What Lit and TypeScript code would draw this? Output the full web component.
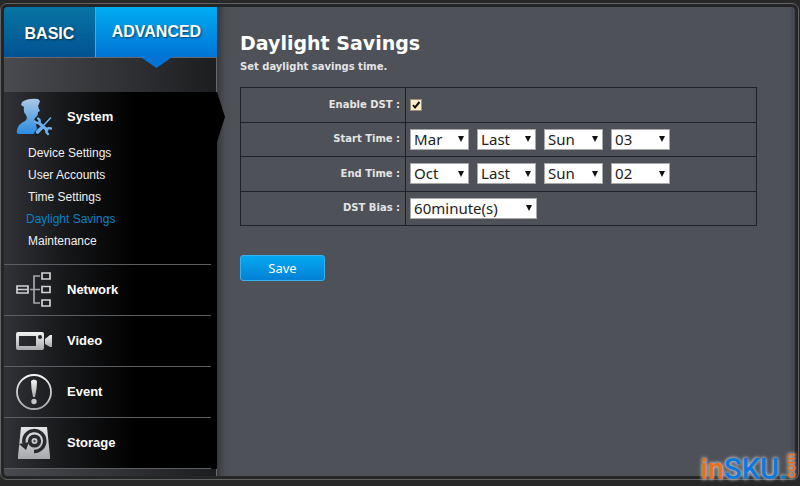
import { LitElement, html, css, svg } from "lit";
import { customElement, property, state } from "lit/decorators.js";
import { classMap } from "lit/directives/class-map.js";

const icons: Record<string, unknown> = {
  system: svg`
    <defs><linearGradient id="blue" gradientUnits="userSpaceOnUse" x1="0" y1="1" x2="0" y2="36">
      <stop offset="0" stop-color="#a9c8e8"/><stop offset="1" stop-color="#2a8be0"/>
    </linearGradient></defs>
    <path fill="url(#blue)" d="M6 4Q12 0 22 1L24 3 23 6 22 8Q23 11 24 13L22 14Q22 18 20 19L19 20Q18 24 20 26L22 36H3Q0 36 1 32Q2 26 9 23Q12 21 10 17Q7 14 8 9L5 7Z"/>
    <path fill="none" stroke="#16181b" stroke-width="5" stroke-linecap="round" d="M21 22L33 34M34 21L21 35"/>
    <g fill="none" stroke="#6fb0ea" stroke-linecap="round">
      <path stroke-width="3" d="M23 25L31 32"/>
      <path stroke-width="2.400" d="M22 20.500Q24.500 22 23.500 24.500Q21 26 18.800 23.500M35 30.500Q31.500 29.500 30.500 31.500Q29.500 34.500 32 36"/>
      <path stroke-width="1.700" d="M34.500 20L27 28"/>
      <path stroke-width="3.800" d="M25 30.500L21.500 34"/>
    </g>`,
  network: svg`
    <g fill="none" stroke="#d2d2d4" stroke-width="1.700">
      <path d="M1 15H12V22H1ZM1 18.500H12"/><path d="M26 2H34V8H26Z"/><path d="M26 15.500H34V21.500H26Z"/><path d="M26 29H34V35H26Z"/>
      <path stroke="#a5a6a8" d="M14 18.500H24M24 5H18V32H24"/>
    </g>`,
  video: svg`
    <defs><linearGradient id="silver" x1="0" y1="0" x2="0" y2="1">
      <stop offset="0" stop-color="#f2f2f2"/><stop offset="1" stop-color="#a9aaac"/>
    </linearGradient></defs>
    <path fill="url(#silver)" fill-rule="evenodd" d="M2 10H26Q28 10 28 12V26Q28 28 26 28H2Q0 28 0 26V12Q0 10 2 10ZM3 14V24H20V14ZM24 13A2 2 0 1 0 24 17A2 2 0 1 0 24 13Z"/>
    <path fill="url(#silver)" d="M29 17L34 13H36V25H34L29 22Z"/>`,
  event: svg`
    <defs><linearGradient id="ring" x1="0" y1="0" x2="0" y2="1">
      <stop offset="0" stop-color="#f4f4f4"/><stop offset="1" stop-color="#a9aaac"/>
    </linearGradient></defs>
    <circle cx="18" cy="19" r="17" fill="none" stroke="url(#ring)" stroke-width="1.800"/>
    <path fill="url(#ring)" d="M15 8Q18 5 21 8Q21 15 19 24H17Q15 15 15 8Z"/><circle cx="18" cy="28.500" r="2.700" fill="#c4c4c6"/>`,
  storage: svg`
    <defs><linearGradient id="disk" x1="0" y1="0" x2="0" y2="1">
      <stop offset="0" stop-color="#e6e6e7"/><stop offset="1" stop-color="#a7a8ac"/>
    </linearGradient></defs>
    <path fill="url(#disk)" d="M5 3H31L34 32V35H2V32Z"/>
    <path fill="none" stroke="#27292c" stroke-width="3.400" d="M8 19A10.500 10.500 0 1 1 18 27.500"/>
    <path fill="#27292c" d="M3 20L13 18 10 26Z"/>
    <circle cx="18.500" cy="17" r="4.800" fill="none" stroke="#27292c" stroke-width="3.600"/>
    <circle cx="18.500" cy="17" r="1.200" fill="#4a4b4e"/>`,
};

@customElement("nav-section")
class NavSection extends LitElement {
  @property() icon = "";
  @property() label = "";
  @property({ type: Array }) items: string[] = [];
  @property() current = "";

  static styles = css`
    :host { display: block; position: relative; background: linear-gradient(90deg, #303237 0, #17181a 28%, #000 62%); }
    .head { display: flex; align-items: center; gap: 15px; height: 50px; padding-left: 12px; color: #fff; text-decoration: none; font: bold 13px/16px "Liberation Sans", Arial, sans-serif; }
    .head svg { width: 36px; height: 38px; flex: none; }
    .rule { height: 1px; margin-right: 6px; background: #5c5e62; }
    .list { list-style: none; margin: 0; padding: 0 0 12px 24px; }
    .link { color: #f0f0f0; text-decoration: none; font: 12px/22px "Liberation Sans", Arial, sans-serif; }
    .entry { height: 22px; }
    .entry.active { margin-left: -2px; }
    .active .link { color: #0781c8; }
    .pointer { position: absolute; left: 100%; top: 0; width: 8px; height: 50px; background: #000; clip-path: polygon(0 0, 100% 50%, 0 100%); }
  `;

  render() {
    return html`
      <a class="head" href="#${this.icon}">
        <svg viewBox="0 0 36 38" aria-hidden="true">${icons[this.icon]}</svg>${this.label}
      </a>
      ${this.items.length
        ? html`<ul class="list">
              ${this.items.map((item) => html`<li class=${classMap({ entry: true, active: item === this.current })}>
                <a class="link" href="#">${item}</a></li>`)}
            </ul>
            <span class="pointer"></span>`
        : null}
      <div class="rule"></div>
    `;
  }
}

@customElement("select-box")
class SelectBox extends LitElement {
  @property() label = "";
  @property() value = "";
  @property({ type: Boolean, reflect: true }) wide = false;

  static styles = css`
    :host { display: inline-grid; width: 59px; }
    :host([wide]) { width: 127px; }
    .field, .arrow { grid-area: 1 / 1; }
    .field { appearance: none; box-sizing: border-box; width: 100%; height: 21px; margin: 0; padding: 0 3px; border: 1px solid #a9a9a9; border-radius: 0; background: #fff; color: #222; font: 15px/19px "Noto Sans", sans-serif; }
    .arrow { justify-self: end; align-self: center; width: 6px; height: 6px; margin-right: 5px; fill: #111; pointer-events: none; }
  `;

  render() {
    return html`
      <select class="field" aria-label=${this.label}><option>${this.value}</option></select>
      <svg class="arrow" viewBox="0 0 6 6" aria-hidden="true"><path d="M0 0H6L3 6Z" /></svg>
    `;
  }
}

@customElement("app-root")
class AppRoot extends LitElement {
  @state() private enabled = true;

  private rows = [
    { label: "Start Time :", values: ["Mar", "Last", "Sun", "03"] },
    { label: "End Time :", values: ["Oct", "Last", "Sun", "02"] },
  ];
  private parts = ["month", "week", "day", "hour"];

  static styles = css`
    :host { display: block; position: relative; box-sizing: border-box; min-height: 100vh; padding: 3px 1px 6px 0; background: #282828; }
    .frame { box-sizing: border-box; min-height: calc(100vh - 9px); display: flex; padding: 3px; border: 1px solid #626262; border-radius: 7px; background: #242527; }
    .side { flex: none; width: 213px; display: flex; flex-direction: column; border-radius: 4px 0 0 4px; background: linear-gradient(90deg, #494b50, #1c1d1f); }
    .tabs { display: flex; border-radius: 4px 0 0 0; }
    .tab { height: 50px; border: 0; padding: 0; color: #fff; font: bold 16px/20px "Liberation Sans", Arial, sans-serif; text-shadow: 1px 1px 2px #0008; }
    .basic { flex: 3; border-radius: 4px 0 0 0; background: linear-gradient(#0775a3, #015292); }
    .advanced { position: relative; flex: 4; border-left: 1px solid #4fa6dc; background: linear-gradient(#00acf2, #0174d6); }
    .advanced::after { content: ""; position: absolute; top: 100%; left: 50%; width: 32px; height: 11px; margin-left: -16px; background: #0174d6; clip-path: polygon(0 0, 100% 0, 50% 100%); }
    .tab .text { display: block; padding-top: 4px; }
    .advanced .text { padding: 0; }
    .strip { height: 35px; box-sizing: border-box; border: solid #66686d; border-width: 1px 1px 0 0; }
    .tail { flex: 1; min-height: 6px; border-right: 1px solid #66686d; }
    .main { flex: 1; min-width: 0; padding: 24px 38px 24px 23px; border-radius: 0 4px 4px 0; color: #fff; background: linear-gradient(90deg, #36383d 0, #4b4e54 8px, #4e5158 16px, #4e5158 calc(100% - 6px), #43464c); font-family: "DejaVu Sans", Verdana, sans-serif; }
    .title { margin: 0; font-size: 19px; line-height: 24px; font-weight: bold; }
    .intro { margin: 5px 0 13px; font-size: 10px; line-height: 14px; font-weight: bold; color: #e4e4e4; }
    .form { width: 100%; height: 139px; border-collapse: collapse; }
    .form th, .form td { height: 34px; box-sizing: border-box; border: 1px solid #202124; padding: 0; }
    .form th { width: 32%; padding-right: 5px; text-align: right; font-size: 10px; line-height: 14px; color: #e4e4e4; }
    .form td { padding-left: 4px; }
    .cells { display: flex; align-items: center; gap: 8px; }
    .check { appearance: none; display: block; width: 12px; height: 12px; margin: 0; border: 1px solid #9c927c; background: #fbeccb; }
    .box { display: grid; justify-content: start; }
    .box .check, .tick { grid-area: 1 / 1; }
    .tick { width: 12px; height: 12px; pointer-events: none; fill: none; stroke: #111; stroke-width: 2; }
    .save { display: block; width: 85px; height: 26px; margin-top: 29px; padding: 0; border: 1px solid #36b2ec; border-radius: 3px; background: linear-gradient(#05a8f0, #0280d6); color: #fff; font: 13px/18px "Noto Sans", sans-serif; }
    .mark { position: absolute; right: 3px; bottom: 2px; display: flex; align-items: flex-end; font: 500 29px/30px Roboto, "Liberation Sans", sans-serif; color: #0d78de; text-shadow: 0 0 3px #c4c6cc, 0 0 4px #c4c6cc; }
    .orange { color: #e8701a; }
    .com { writing-mode: vertical-rl; rotate: 180deg; margin: 0 0 6px -2px; font-size: 13px; line-height: 12px; color: #e8701a; }
  `;

  render() {
    return html`
      <div class="frame">
        <nav class="side" aria-label="Settings">
          <div class="tabs">
            <button class="tab basic"><span class="text">BASIC</span></button>
            <button class="tab advanced"><span class="text">ADVANCED</span></button>
          </div>
          <div class="strip"></div>
          <nav-section icon="system" label="System" current="Daylight Savings"
            .items=${["Device Settings", "User Accounts", "Time Settings", "Daylight Savings", "Maintenance"]}></nav-section>
          <nav-section icon="network" label="Network"></nav-section>
          <nav-section icon="video" label="Video"></nav-section>
          <nav-section icon="event" label="Event"></nav-section>
          <nav-section icon="storage" label="Storage"></nav-section>
          <div class="tail"></div>
        </nav>
        <main class="main">
          <h1 class="title">Daylight Savings</h1>
          <p class="intro">Set daylight savings time.</p>
          <table class="form">
            <tr>
              <th scope="row"><label for="dst">Enable DST :</label></th>
              <td>
                <span class="box">
                  <input id="dst" class="check" type="checkbox" .checked=${this.enabled}
                    @change=${(e: Event) => (this.enabled = (e.target as HTMLInputElement).checked)} />
                  ${this.enabled ? html`<svg class="tick" viewBox="0 0 12 12" aria-hidden="true"><path d="M3 6L5 8.500L9.500 3" /></svg>` : null}
                </span>
              </td>
            </tr>
            ${this.rows.map((row) => html`<tr>
              <th scope="row">${row.label}</th>
              <td><div class="cells">
                ${row.values.map((v, i) => html`<select-box label="${row.label} ${this.parts[i]}" value=${v}></select-box>`)}
              </div></td>
            </tr>`)}
            <tr>
              <th scope="row">DST Bias :</th>
              <td><div class="cells"><select-box wide label="DST Bias" value="60minute(s)"></select-box></div></td>
            </tr>
          </table>
          <button class="save">Save</button>
        </main>
      </div>
      <div class="mark"><span class="orange">in</span><span>SKU.</span><span class="com">com</span></div>
    `;
  }
}
